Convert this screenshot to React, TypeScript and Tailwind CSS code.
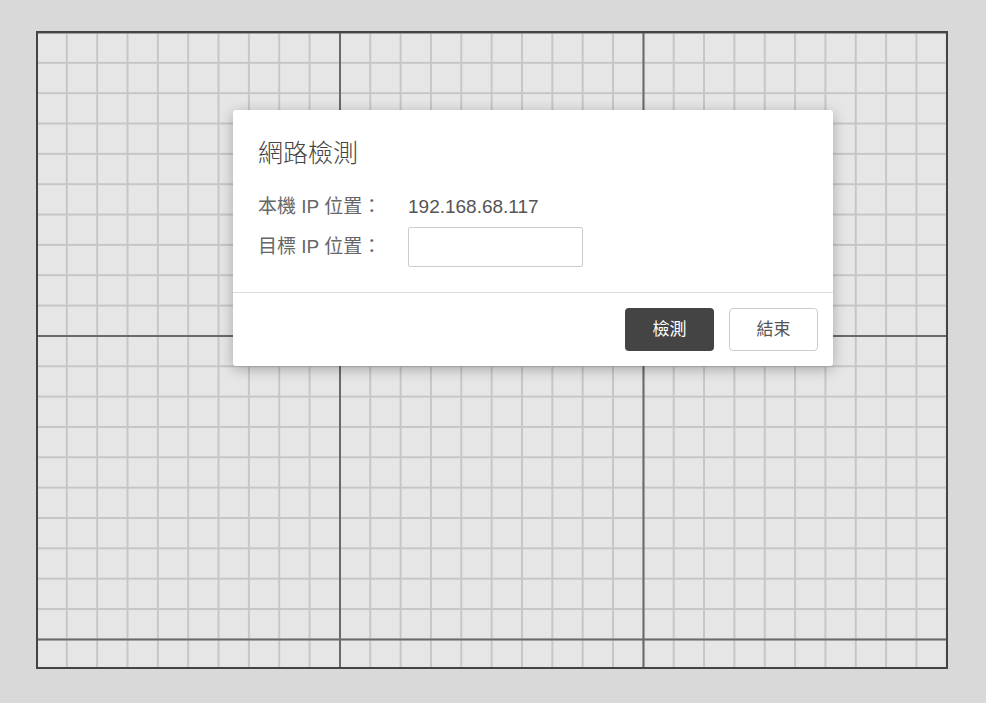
export default function App() {
  return (
    <div className="w-[986px] h-[703px] bg-[#d9d9d9] pl-[36px] pt-[31px] font-['Liberation_Sans','Noto_Sans_CJK_TC',sans-serif]">
      <div className="relative w-[912px] h-[638px] border-2 border-[#444] bg-[#e6e6e6] bg-[linear-gradient(to_right,#6a6a6a_2px,transparent_2px),linear-gradient(to_bottom,#6a6a6a_2px,transparent_2px),linear-gradient(to_right,#c6c6c6_2px,transparent_2px),linear-gradient(to_bottom,#c6c6c6_2px,transparent_2px)] bg-[size:303.5px_303.5px,303.5px_303.5px,30.35px_30.35px,30.35px_30.35px] bg-[position:-2.5px_-1.5px]">
        <div className="absolute left-[195px] top-[77px] w-[600px] bg-white rounded-[3px] shadow-[0_3px_14px_rgba(0,0,0,0.28)]">
          <div className="px-[25px] pt-[28px] pb-[25px]">
            <h2 className="text-[25px] leading-[30px] text-[#444] font-light">網路檢測</h2>
            <div className="mt-[21px] flex flex-col gap-[2px] text-[19px] text-[#666]">
              <div className="flex items-center h-[36px]">
                <span className="w-[150px]">本機 IP 位置：</span>
                <span className="text-[#555]">192.168.68.117</span>
              </div>
              <div className="flex items-center h-[40px]">
                <span className="w-[150px]">目標 IP 位置：</span>
                <input className="w-[175px] h-[40px] border border-[#ccc] rounded-[2px] outline-none px-2" />
              </div>
            </div>
          </div>
          <div className="border-t border-[#ddd] flex justify-end gap-[15px] pt-[15px] pb-[15px] pr-[15px]">
            <button className="w-[89px] h-[43px] bg-[#444] text-white text-[17px] rounded-[4px]">檢測</button>
            <button className="w-[89px] h-[43px] bg-white border border-[#ccc] text-[#555] text-[17px] rounded-[4px]">結束</button>
          </div>
        </div>
      </div>
    </div>
  );
}
